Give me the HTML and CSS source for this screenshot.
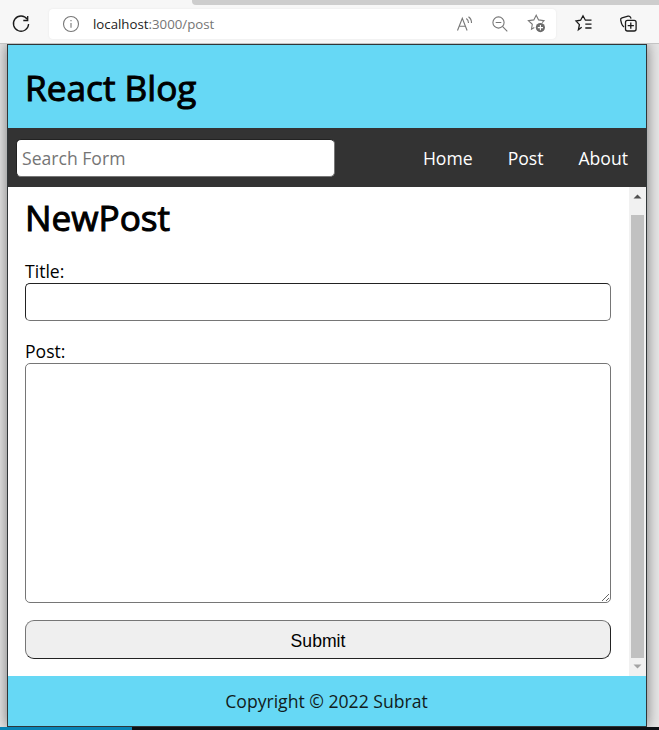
FILE: index.html
```html
<!DOCTYPE html>
<html lang="en">
<head>
<meta charset="utf-8">
<title>React Blog</title>
<link rel="stylesheet" href="styles.css">
</head>
<body>
<div class="tabstrip"><div class="tabs"></div></div>
<div class="toolbar">
  <svg class="reload" width="20" height="20" viewBox="0 0 20 20"><path d="M16.2 5.2A7.6 7.6 0 1 0 17.6 10M16.7 2v4.5h-4.4"/></svg>
  <div class="address">
    <svg class="info" width="18" height="18" viewBox="0 0 18 18"><circle cx="9" cy="9" r="7.5"/><path d="M9 8v4.8M9 5v1.3"/></svg>
    <span class="url"><b>localhost</b>:3000/post</span>
    <svg class="read" width="18" height="18" viewBox="0 0 18 18"><path d="M1.5 15.5 6.3 3.2l4.8 12.3M3.2 11.3h6.2M10.3 3.5q2.3 1.6 2.2 4.5M12.5 1.7q3.1 2.2 3 6.3"/></svg>
    <svg class="zoom" width="18" height="18" viewBox="0 0 18 18"><circle cx="7.5" cy="7.5" r="5.6"/><path d="M4.7 7.5h5.6M11.7 11.7l4.6 4.6"/></svg>
    <svg class="fav" width="20" height="20" viewBox="0 0 20 20"><path d="M7.3 13.6 4.5 15.2 5.3 10.3 1.4 6.7 6.8 5.9 9.2 1.3 11.6 5.9 17 6.7 15.2 8.7"/><circle class="dot" cx="13.4" cy="13.6" r="4.6"/><path class="plus" d="M13.4 11v5.2M10.8 13.6H16"/></svg>
  </div>
  <svg class="list" width="20" height="20" viewBox="0 0 20 20"><path d="M7.7 13.3 4.4 15.8 5.4 10.6 2 7 6.6 6.2 9 1.8 11.4 6.2H17.5M11.3 10.2h6.2M11.3 14h6.2"/></svg>
  <svg class="collect" width="20" height="20" viewBox="0 0 20 20"><path d="M5.1 12.8C3.5 12.2 3 11 2.6 9.6L1.7 6.1Q1.3 4.3 3 3.8L9 2.2Q10.9 1.8 11.6 3.4L12 4.6"/><rect x="6.5" y="6.4" width="10.6" height="10.6" rx="2"/><path d="M11.8 8.6v6.2M8.7 11.7h6.2"/></svg>
</div>
<div class="viewport">
  <div class="app">
    <header class="header"><h1>React Blog</h1></header>
    <nav class="nav">
      <input class="search" type="text" placeholder="Search Form">
      <ul class="links"><li>Home</li><li>Post</li><li>About</li></ul>
    </nav>
    <div class="body">
      <main class="main">
        <h2>NewPost</h2>
        <label>Title:</label>
        <input class="title" type="text">
        <label>Post:</label>
        <textarea class="post"></textarea>
        <button class="submit">Submit</button>
      </main>
      <div class="scrollbar">
        <svg width="9" height="5" viewBox="0 0 9 5"><path fill="#505050" d="M.5 4.5 4.5.5l4 4z"/></svg>
        <div class="thumb"></div>
        <svg width="9" height="5" viewBox="0 0 9 5"><path fill="#a3a3a3" d="M.5.5h8l-4 4z"/></svg>
      </div>
    </div>
    <footer class="footer">Copyright © 2022 Subrat</footer>
  </div>
</div>
<div class="taskbar"><div class="active"></div></div>
</body>
</html>
```
FILE: styles.css
```css
* { box-sizing: border-box; margin: 0; padding: 0; }
body { width: 659px; height: 730px; overflow: hidden; display: flex; flex-direction: column; background: #f7f7f7; font: 17.6px/24px "Open Sans", sans-serif; color: #000; }
.tabstrip { height: 5px; flex: none; padding-left: 192px; }
.tabs { height: 5px; background: #cdcdcd; border-bottom-left-radius: 4px; }
.toolbar { height: 38px; flex: none; display: flex; align-items: center; padding-left: 11px; }
svg { flex: none; fill: none; stroke: #1b1b1b; stroke-width: 1.3; }
.address { width: 507px; height: 30px; margin-left: 18px; background: #fff; border-radius: 4px; box-shadow: 0 0 2px #e4e4e4; display: flex; align-items: center; padding-left: 13px; }
.address svg { stroke: #777; stroke-width: 1.1; }
.url { width: 363px; margin-left: 13px; font-size: 13.25px; line-height: 20px; color: #757575; }
.url b { font-weight: 400; color: #222; }
.zoom { margin-left: 17px; }
.fav { margin-left: 18px; }
.fav .dot { fill: #6b6b6b; stroke: none; }
.fav .plus { stroke: #fff; }
.list { margin-left: 18px; }
.collect { margin-left: 25px; }
.viewport { height: 684px; flex: none; padding: 0 12px 0 7px; background: #e6e6e6; border-top: 1px solid #c4c4c4; overflow: hidden; }
.app { width: 640px; height: 683px; border: 1px solid #303638; box-shadow: 0 0 13px #777; background: #fff; display: flex; flex-direction: column; }
.header { height: 83px; flex: none; background: #66d8f5; padding: 18px 17px; }
h1, h2 { font-size: 35.2px; line-height: 48px; font-weight: 400; -webkit-text-stroke: 1px #000; }
.nav { height: 59px; flex: none; background: #333; display: flex; align-items: center; padding: 1px 18px 0 8px; justify-content: space-between; }
input, textarea { display: block; font: inherit; }
.search { width: 319px; height: 38px; border: 1px solid #222; border-bottom-color: #777; border-right-color: #777; border-radius: 5px; padding: 0 5px; background: #fff; }
.search::placeholder { color: #757575; }
.links { display: flex; gap: 35px; list-style: none; color: #fff; }
.body { height: 489px; flex: none; display: flex; }
.main { width: 621px; padding: 6px 18px 0 17px; }
h2 { margin-bottom: 18px; }
label { display: block; height: 24px; line-height: 24px; }
.title { width: 586px; height: 38px; border: 1px solid #767676; border-top-color: #222; border-left-color: #222; border-radius: 5px; margin-bottom: 18px; }
.post { width: 586px; height: 240px; margin-bottom: 17px; border: 1px solid #767676; border-radius: 5px; resize: vertical; }
.submit { width: 586px; height: 39px; display: block; background: #efefef; border: 1px solid #767676; border-right-color: #222; border-bottom-color: #222; border-radius: 9px; font: 17.6px "Liberation Sans", Arial, sans-serif; padding-top: 3px; }
.scrollbar { width: 17px; height: 489px; background: #f1f1f1; display: flex; flex-direction: column; align-items: center; padding: 7px 0; }
.scrollbar svg { stroke: none; }
.thumb { width: 13px; height: 444px; margin: 16px 0 6px; background: #c1c1c1; }
.footer { height: 50px; flex: none; background: #66d8f5; color: #111c20; text-align: center; padding: 13px 1px 0 0; }
.taskbar { height: 3px; flex: none; background: #0c1014; }
.active { width: 132px; height: 3px; background: #0784b5; }
```
